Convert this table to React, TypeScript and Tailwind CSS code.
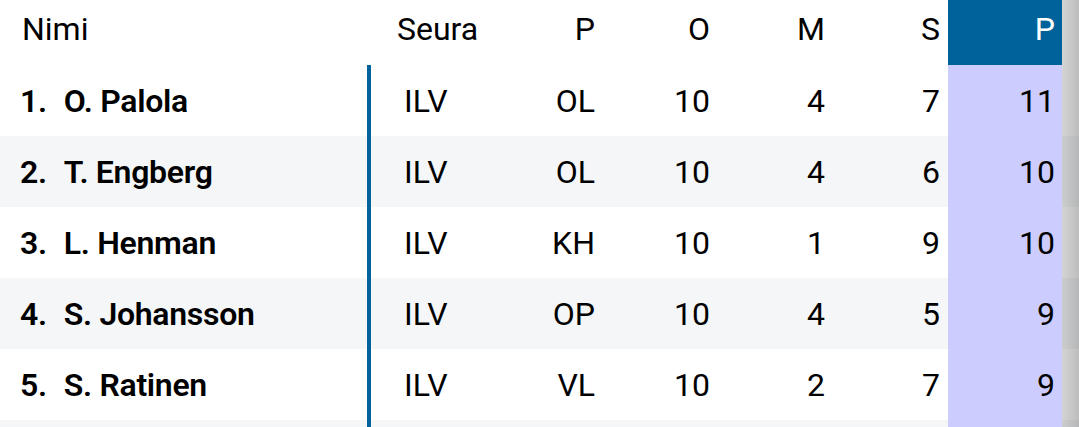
import React from "react";

const rows = [
  { n: "1.", name: "O. Palola", club: "ILV", pos: "OL", o: "10", m: "4", s: "7", p: "11" },
  { n: "2.", name: "T. Engberg", club: "ILV", pos: "OL", o: "10", m: "4", s: "6", p: "10" },
  { n: "3.", name: "L. Henman", club: "ILV", pos: "KH", o: "10", m: "1", s: "9", p: "10" },
  { n: "4.", name: "S. Johansson", club: "ILV", pos: "OP", o: "10", m: "4", s: "5", p: "9" },
  { n: "5.", name: "S. Ratinen", club: "ILV", pos: "VL", o: "10", m: "2", s: "7", p: "9" },
  { n: "", name: "", club: "", pos: "", o: "", m: "", s: "", p: "" },
];

export default function App() {
  return (
    <div
      className="relative w-[1079px] h-[427px] overflow-hidden bg-white text-black"
      style={{ fontFamily: "Roboto, 'Liberation Sans', sans-serif" }}
    >
      <table className="table-fixed border-collapse w-[1096px] text-[32px] leading-none">
        <colgroup>
          <col className="w-[369px]" />
          <col className="w-[119px]" />
          <col className="w-[115px]" />
          <col className="w-[115px]" />
          <col className="w-[115px]" />
          <col className="w-[115px]" />
          <col className="w-[114px]" />
          <col className="w-[34px]" />
        </colgroup>
        <thead>
          <tr className="h-[65px]">
            <th className="text-left font-normal pl-[22px] pb-[8px]">Nimi</th>
            <th className="text-left font-normal pl-[28px] pb-[8px]">Seura</th>
            <th className="text-right font-normal pr-[8px] pb-[8px]">P</th>
            <th className="text-right font-normal pr-[8px] pb-[8px]">O</th>
            <th className="text-right font-normal pr-[8px] pb-[8px]">M</th>
            <th className="text-right font-normal pr-[8px] pb-[8px]">S</th>
            <th className="text-right font-normal pr-[7px] pb-[8px] bg-[#00629b] text-white">P</th>
            <th></th>
          </tr>
        </thead>
        <tbody>
          {rows.map((r, i) => (
            <tr key={i} className={`h-[71px] ${i % 2 === 1 ? "bg-[#f5f6f7]" : "bg-white"}`}>
              <td className="pl-[20px] font-semibold whitespace-nowrap tracking-[-0.3px]">
                {r.n && <span>{r.n}</span>}
                {r.name && <span className="ml-[17px]">{r.name}</span>}
              </td>
              <td className="border-l-4 border-[#00629b] pl-[33px]">{r.club}</td>
              <td className="text-right pr-[8px]">{r.pos}</td>
              <td className="text-right pr-[8px]">{r.o}</td>
              <td className="text-right pr-[8px]">{r.m}</td>
              <td className="text-right pr-[8px]">{r.s}</td>
              <td className="text-right pr-[7px] bg-[#ccccfe]">{r.p}</td>
              <td></td>
            </tr>
          ))}
        </tbody>
      </table>
      <div className="absolute top-0 right-0 h-full w-[17px] bg-gradient-to-r from-[rgba(0,0,0,0.17)] to-[rgba(0,0,0,0.26)]" />
    </div>
  );
}
